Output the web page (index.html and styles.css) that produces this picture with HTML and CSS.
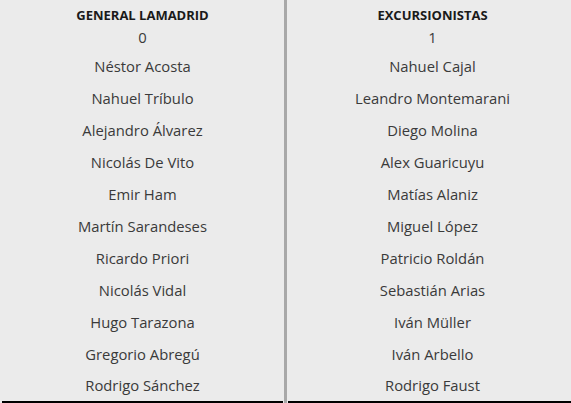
FILE: index.html
```html
<!DOCTYPE html>
<html>
<head>
<meta charset="utf-8">
<link rel="stylesheet" href="styles.css">
</head>
<body>
<div class="lineups">
  <div class="team">
    <div class="team-name">GENERAL LAMADRID</div>
    <div class="score">0</div>
    <ul class="players">
      <li>Néstor Acosta</li>
      <li>Nahuel Tríbulo</li>
      <li>Alejandro Álvarez</li>
      <li>Nicolás De Vito</li>
      <li>Emir Ham</li>
      <li>Martín Sarandeses</li>
      <li>Ricardo Priori</li>
      <li>Nicolás Vidal</li>
      <li>Hugo Tarazona</li>
      <li>Gregorio Abregú</li>
      <li>Rodrigo Sánchez</li>
    </ul>
  </div>
  <div class="divider"></div>
  <div class="team">
    <div class="team-name">EXCURSIONISTAS</div>
    <div class="score">1</div>
    <ul class="players">
      <li>Nahuel Cajal</li>
      <li>Leandro Montemarani</li>
      <li>Diego Molina</li>
      <li>Alex Guaricuyu</li>
      <li>Matías Alaniz</li>
      <li>Miguel López</li>
      <li>Patricio Roldán</li>
      <li>Sebastián Arias</li>
      <li>Iván Müller</li>
      <li>Iván Arbello</li>
      <li>Rodrigo Faust</li>
    </ul>
  </div>
</div>
</body>
</html>
```

FILE: styles.css
```css
html, body {
  margin: 0;
  padding: 0;
  background: #ebebeb;
}
body {
  font-family: "Open Sans", "Noto Sans", sans-serif;
  color: #3a3a3a;
  overflow: hidden;
}
.lineups {
  display: flex;
  padding-left: 2px;
  width: 575px;
}
.team {
  flex: 0 0 281px;
  border-bottom: 2px solid #000;
  text-align: center;
  padding-top: 6px;
}
.team:last-child {
  flex: 1 1 auto;
}
.divider {
  width: 3px;
  margin: 0 1px;
  background: #a8a8a8;
}
.team-name {
  font-weight: 700;
  font-size: 13px;
  color: #1a1a1a;
  line-height: 18px;
}
.score {
  font-size: 14.8px;
  line-height: 20px;
  margin-top: 3px;
}
.players {
  list-style: none;
  margin: 0;
  padding: 3px 0 1px;
}
.players li {
  font-size: 14.8px;
  line-height: 32px;
}
.players li:last-child {
  line-height: 29px;
  padding-top: 1px;
}
```
